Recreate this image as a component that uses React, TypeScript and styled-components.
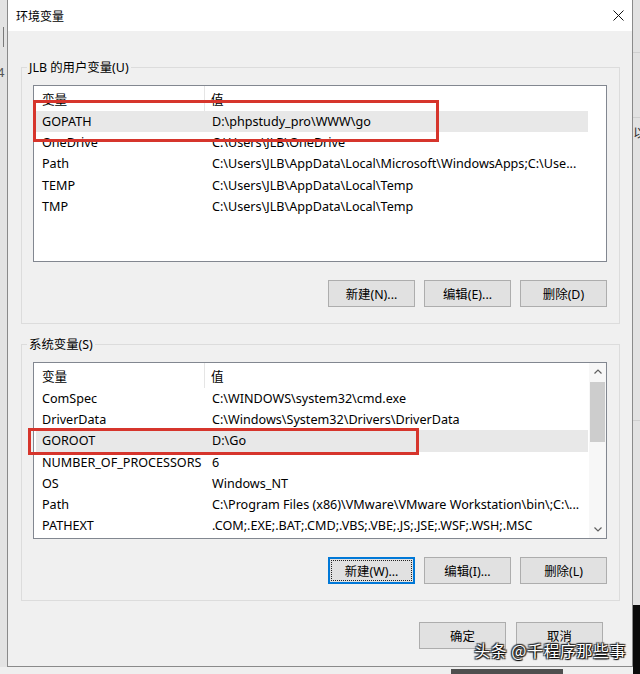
import React from "react";
import styled, { createGlobalStyle, css } from "styled-components";

const FONT = `"Noto Sans", "Noto Sans CJK SC", sans-serif`;

const GlobalStyle = createGlobalStyle`
  html, body { margin: 0; padding: 0; background: #e9e9e9; }
  body { font-family: ${FONT}; }
  * { box-sizing: border-box; }
`;

const Screen = styled.div`
  position: relative;
  width: 640px;
  height: 674px;
  overflow: hidden;
  display: flex;
  flex-direction: column;
  background: #e9e9e9;
`;

const Upper = styled.div`
  display: flex;
  height: 667px;
  flex: none;
`;

const LeftEdge = styled.div`
  width: 7px;
  flex: none;
  display: flex;
  flex-direction: column;
  align-items: flex-start;
  background: #e3e3e3;
  overflow: hidden;
`;

const EdgeTick = styled.div`
  margin: 27px 0 0 3px;
  width: 1px;
  height: 20px;
  flex: none;
  background: #7a7a7a;
`;

const EdgeGlyph = styled.span`
  margin: 17px 0 0 -3px;
  font: 13px/16px ${FONT};
  color: #555;
`;

const RightEdge = styled.div`
  width: 7px;
  flex: none;
  display: flex;
  flex-direction: column;
  overflow: hidden;
`;

const RightGray = styled.div`
  height: 605px;
  flex: none;
  background: #e2e2e2;
  display: flex;
  flex-direction: column;
`;

const RightLine = styled.div<{ $mt: number }>`
  margin-top: ${(p) => p.$mt}px;
  height: 1px;
  flex: none;
  background: #cfcfcf;
`;

const RightGlyph = styled.span`
  margin-top: 6px;
  font: 13px/16px ${FONT};
  color: #333;
`;

const RightDark = styled.div`
  flex: 1;
  background: #0b0b0b;
`;

const Lower = styled.div`
  flex: 1;
  display: flex;
  align-items: flex-end;
  background: #efefef;
`;

const LowerSpacer = styled.div<{ $w: number }>`
  width: ${(p) => p.$w}px;
  flex: none;
`;

const TaskBar = styled.div`
  width: 112px;
  height: 5px;
  flex: none;
  background: #4f4f4f;
`;

const LowerDark = styled.div`
  margin-left: auto;
  width: 7px;
  height: 100%;
  background: #0b0b0b;
`;

const Dialog = styled.div`
  width: 626px;
  flex: none;
  display: flex;
  flex-direction: column;
  background: #f0f0f0;
  border: 1px solid #8a8a8a;
  border-top: none;
`;

const TitleBar = styled.div`
  height: 31px;
  flex: none;
  display: flex;
  align-items: center;
  justify-content: space-between;
  background: #ffffff;
  padding: 0 6px 0 8px;
`;

const Title = styled.span`
  font-size: 12px;
  color: #000;
`;

const CloseBox = styled.div`
  width: 16px;
  height: 16px;
  display: flex;
  align-items: center;
  justify-content: center;
`;

const Body = styled.div`
  flex: 1;
  display: flex;
  flex-direction: column;
  padding: 36px 12px 17px 13px;
`;

const GroupBox = styled.div<{ $mt?: number }>`
  display: flex;
  flex-direction: column;
  margin-top: ${(p) => p.$mt ?? 0}px;
  padding: 0 12px 16px 11px;
  border: 1px solid #dcdcdc;
`;

const GroupLegend = styled.span`
  align-self: flex-start;
  margin: -9px 0 0 -6px;
  padding: 0 2px;
  height: 17px;
  line-height: 17px;
  font-size: 12.4px;
  color: #000;
  background: #f0f0f0;
`;

const ListView = styled.div`
  position: relative;
  margin-top: 9px;
  height: 177px;
  display: flex;
  background: #ffffff;
  border: 1px solid #828790;
`;

const ListBody = styled.div`
  flex: 1;
  display: flex;
  flex-direction: column;
  padding-left: 2px;
  overflow: hidden;
`;

const HeaderRow = styled.div`
  display: flex;
  width: 552px;
  height: 25px;
  flex: none;
  align-items: stretch;
  font-size: 12.6px;
  color: #000;
`;

const HeaderCell = styled.div<{ $first?: boolean }>`
  display: flex;
  align-items: center;
  ${(p) =>
    p.$first
      ? css`
          width: 169px;
          padding-left: 6px;
          border-right: 1px solid #e5e5e5;
        `
      : css`
          flex: 1;
          padding-left: 6px;
        `}
`;

const Row = styled.div<{ $selected?: boolean }>`
  display: flex;
  width: 552px;
  height: 21.2px;
  flex: none;
  align-items: center;
  font-size: 12.6px;
  color: #000;
  white-space: nowrap;
  background: ${(p) => (p.$selected ? "#e8e8e8" : "transparent")};
`;

const NameCell = styled.div`
  width: 169px;
  flex: none;
  padding-left: 6px;
  overflow: hidden;
`;

const ValueCell = styled.div`
  flex: 1;
  padding-left: 7px;
  overflow: hidden;
`;

const ScrollBar = styled.div`
  width: 17px;
  flex: none;
  display: flex;
  flex-direction: column;
  background: #f7f7f7;
`;

const ScrollArrow = styled.div`
  height: 17px;
  flex: none;
  display: flex;
  align-items: center;
  justify-content: center;
`;

const ScrollThumb = styled.div`
  margin: 2px 1px 0 1px;
  height: 60px;
  flex: none;
  background: #cdcdcd;
`;

const ScrollFill = styled.div`
  flex: 1;
`;

const RedMark = styled.div<{ $l: number; $t: number; $w: number; $h: number }>`
  position: absolute;
  left: ${(p) => p.$l}px;
  top: ${(p) => p.$t}px;
  width: ${(p) => p.$w}px;
  height: ${(p) => p.$h}px;
  border: 3px solid #d6352c;
  pointer-events: none;
`;

const ButtonRow = styled.div<{ $mt: number; $gap: number; $pr?: number }>`
  display: flex;
  justify-content: flex-end;
  gap: ${(p) => p.$gap}px;
  margin-top: ${(p) => p.$mt}px;
  padding-right: ${(p) => p.$pr ?? 0}px;
`;

const Button = styled.div<{ $focused?: boolean }>`
  width: 87px;
  height: 27px;
  flex: none;
  display: flex;
  align-items: center;
  justify-content: center;
  font-size: 12.4px;
  color: #000;
  background: #e1e1e1;
  border: 1px solid #adadad;
  ${(p) =>
    p.$focused &&
    css`
      border: 2px solid #0078d7;
      outline: 1px dotted #222;
      outline-offset: -4px;
    `}
`;

const Watermark = styled.div`
  position: absolute;
  right: 14px;
  bottom: 14px;
  font-family: "Noto Sans CJK SC", sans-serif;
  font-size: 16px;
  line-height: 20px;
  color: #ffffff;
  letter-spacing: 0.5px;
  text-shadow: 0 0 1px #000, 1px 1px 1px #000, -1px -1px 1px #333, 1px -1px 1px #333, -1px 1px 1px #333;
  pointer-events: none;
`;

const CloseIcon = () => (
  <svg width="11" height="11" viewBox="0 0 11 11">
    <path d="M0.5 0.5 L10.5 10.5 M10.5 0.5 L0.5 10.5" stroke="#111" strokeWidth="1" fill="none" />
  </svg>
);

const Chevron = ({ up }: { up?: boolean }) => (
  <svg width="8" height="5" viewBox="0 0 8 5">
    <path
      d={up ? "M0.5 4.5 L4 1 L7.5 4.5" : "M0.5 0.5 L4 4 L7.5 0.5"}
      stroke="#606060"
      strokeWidth="1.2"
      fill="none"
    />
  </svg>
);

type Item = { name: string; value: string; selected?: boolean };

const userVars: Item[] = [
  { name: "GOPATH", value: "D:\\phpstudy_pro\\WWW\\go", selected: true },
  { name: "OneDrive", value: "C:\\Users\\JLB\\OneDrive" },
  { name: "Path", value: "C:\\Users\\JLB\\AppData\\Local\\Microsoft\\WindowsApps;C:\\Use..." },
  { name: "TEMP", value: "C:\\Users\\JLB\\AppData\\Local\\Temp" },
  { name: "TMP", value: "C:\\Users\\JLB\\AppData\\Local\\Temp" },
];

const sysVars: Item[] = [
  { name: "ComSpec", value: "C:\\WINDOWS\\system32\\cmd.exe" },
  { name: "DriverData", value: "C:\\Windows\\System32\\Drivers\\DriverData" },
  { name: "GOROOT", value: "D:\\Go", selected: true },
  { name: "NUMBER_OF_PROCESSORS", value: "6" },
  { name: "OS", value: "Windows_NT" },
  { name: "Path", value: "C:\\Program Files (x86)\\VMware\\VMware Workstation\\bin\\;C:\\..." },
  { name: "PATHEXT", value: ".COM;.EXE;.BAT;.CMD;.VBS;.VBE;.JS;.JSE;.WSF;.WSH;.MSC" },
];

const Rows = ({ items }: { items: Item[] }) => (
  <>
    <HeaderRow>
      <HeaderCell $first>变量</HeaderCell>
      <HeaderCell>值</HeaderCell>
    </HeaderRow>
    {items.map((it) => (
      <Row key={it.name} $selected={it.selected}>
        <NameCell>{it.name}</NameCell>
        <ValueCell>{it.value}</ValueCell>
      </Row>
    ))}
  </>
);

export default function App() {
  return (
    <>
      <GlobalStyle />
      <Screen>
        <Upper>
          <LeftEdge>
            <EdgeTick />
            <EdgeGlyph>4</EdgeGlyph>
          </LeftEdge>
          <Dialog>
            <TitleBar>
              <Title>环境变量</Title>
              <CloseBox>
                <CloseIcon />
              </CloseBox>
            </TitleBar>
            <Body>
              <GroupBox>
                <GroupLegend>JLB 的用户变量(U)</GroupLegend>
                <ListView>
                  <ListBody>
                    <Rows items={userVars} />
                  </ListBody>
                  <RedMark $l={-1} $t={14} $w={406} $h={42} />
                </ListView>
                <ButtonRow $mt={18} $gap={9}>
                  <Button>新建(N)...</Button>
                  <Button>编辑(E)...</Button>
                  <Button>删除(D)</Button>
                </ButtonRow>
              </GroupBox>
              <GroupBox $mt={20}>
                <GroupLegend>系统变量(S)</GroupLegend>
                <ListView>
                  <ListBody>
                    <Rows items={sysVars} />
                  </ListBody>
                  <ScrollBar>
                    <ScrollArrow>
                      <Chevron up />
                    </ScrollArrow>
                    <ScrollThumb />
                    <ScrollFill />
                    <ScrollArrow>
                      <Chevron />
                    </ScrollArrow>
                  </ScrollBar>
                  <RedMark $l={-6} $t={65} $w={391} $h={27} />
                </ListView>
                <ButtonRow $mt={18} $gap={9}>
                  <Button $focused>新建(W)...</Button>
                  <Button>编辑(I)...</Button>
                  <Button>删除(L)</Button>
                </ButtonRow>
              </GroupBox>
              <ButtonRow $mt={21} $gap={10} $pr={17}>
                <Button>确定</Button>
                <Button>取消</Button>
              </ButtonRow>
            </Body>
          </Dialog>
          <RightEdge>
            <RightGray>
              <RightLine $mt={52} />
              <RightLine $mt={64} />
              <RightGlyph>以</RightGlyph>
              <RightLine $mt={280} />
            </RightGray>
            <RightDark />
          </RightEdge>
        </Upper>
        <Lower>
          <LowerSpacer $w={451} />
          <TaskBar />
          <LowerDark />
        </Lower>
        <Watermark>头条 @千程序那些事</Watermark>
      </Screen>
    </>
  );
}
